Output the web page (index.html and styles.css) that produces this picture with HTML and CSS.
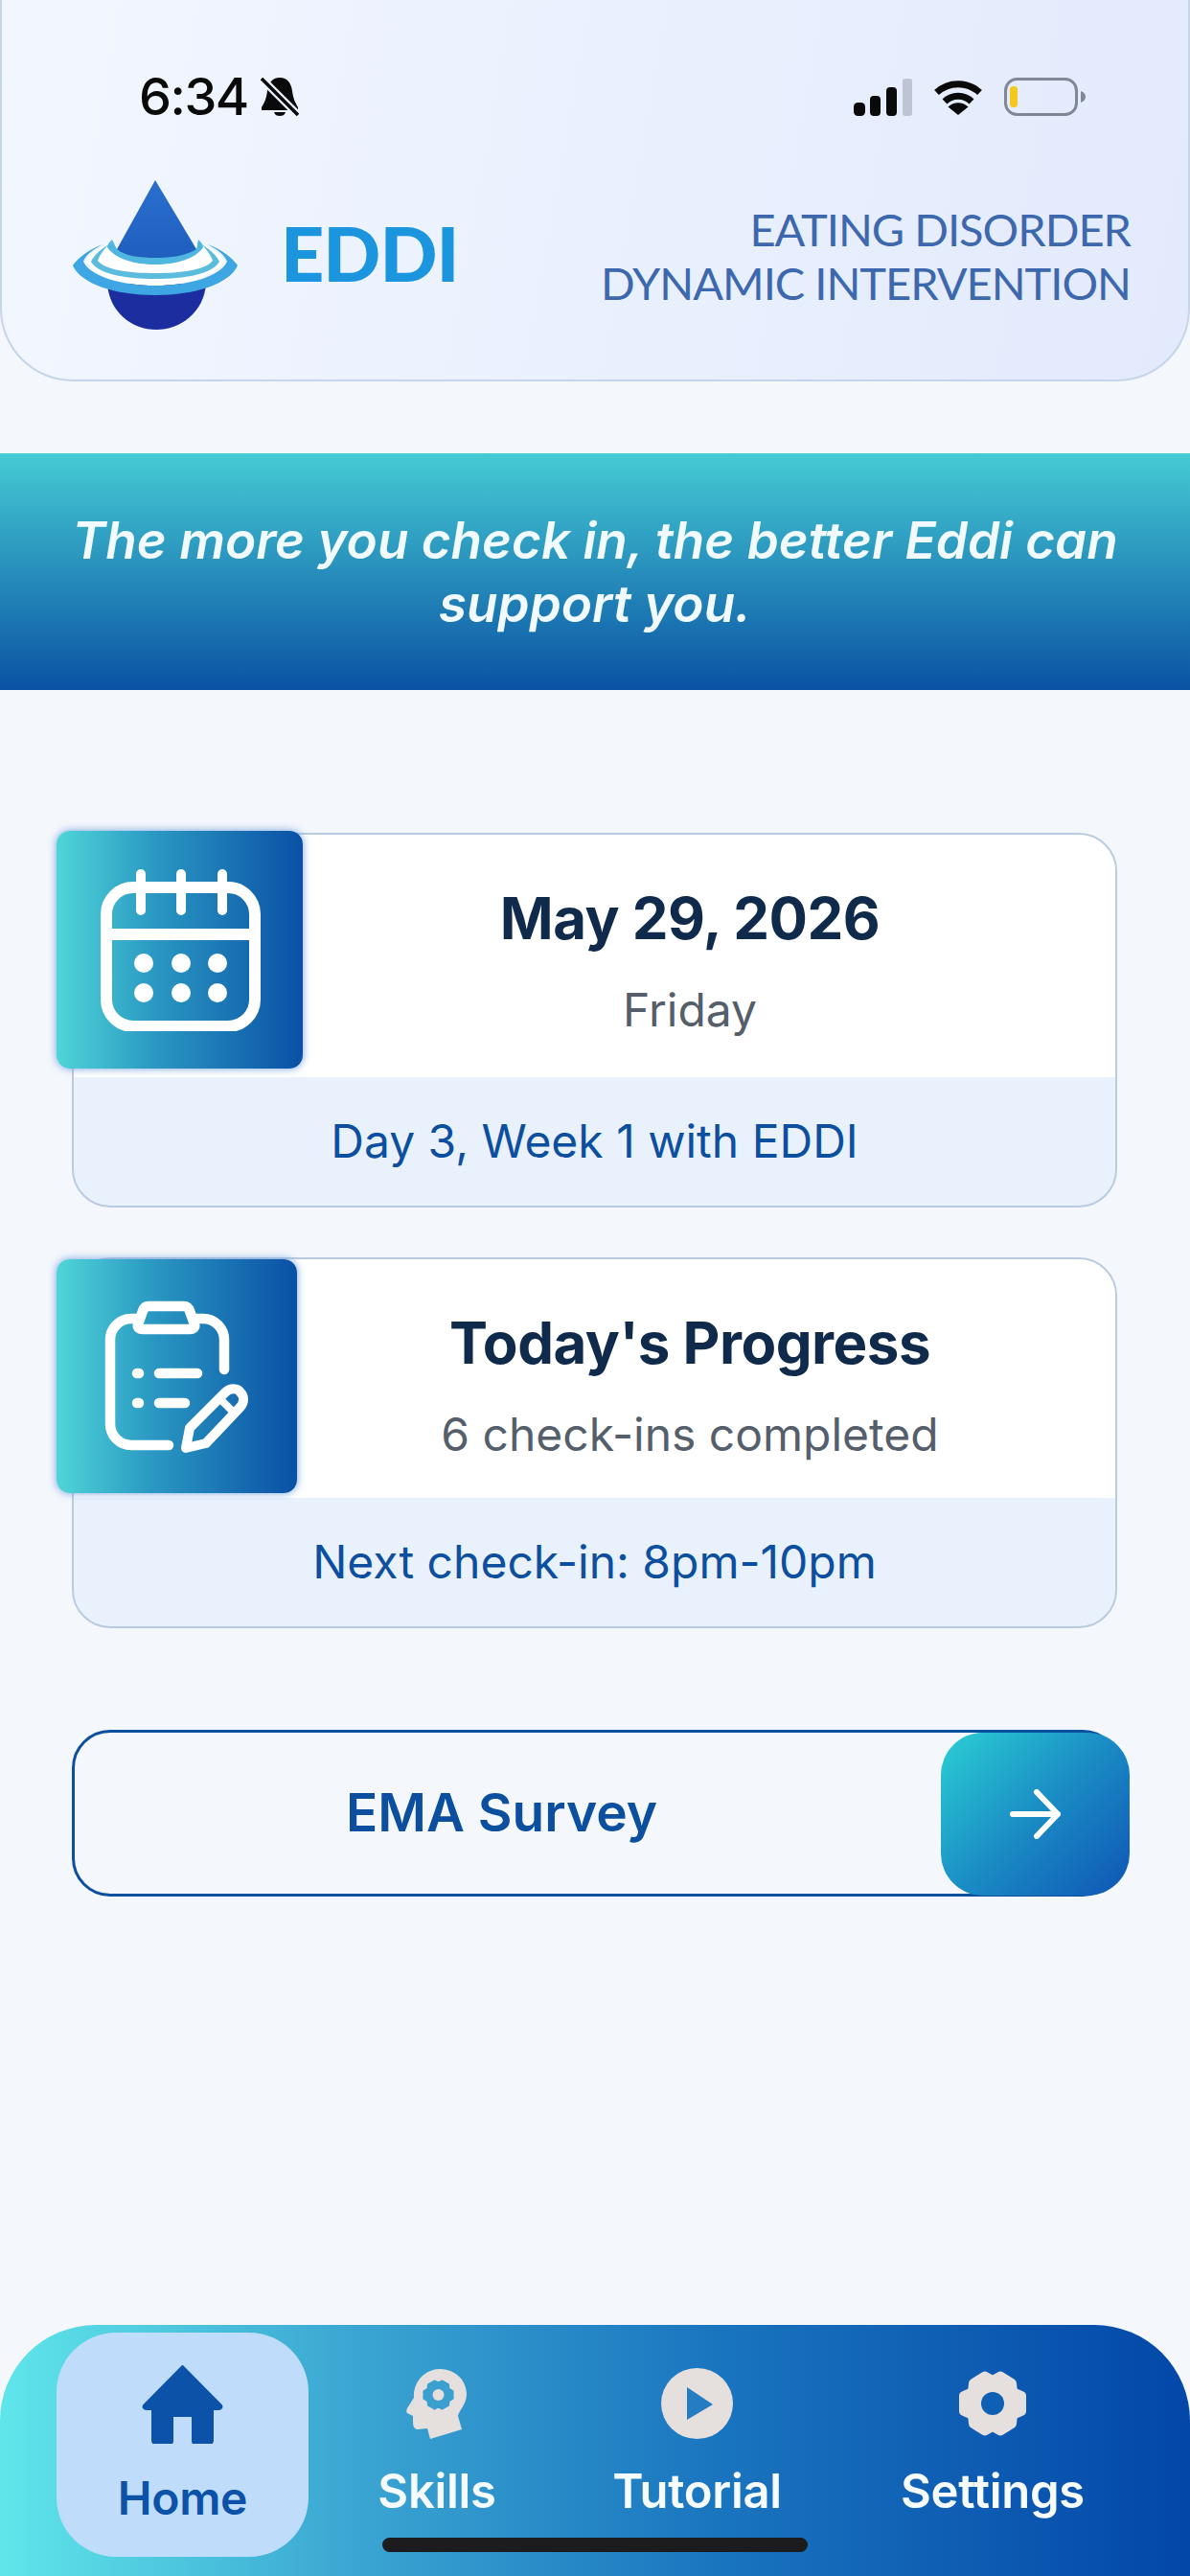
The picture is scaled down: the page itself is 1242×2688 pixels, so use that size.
FILE: index.html
```html
<!DOCTYPE html>
<html lang="en">
<head>
<meta charset="utf-8">
<title>EDDI</title>
<link rel="stylesheet" href="styles.css">
</head>
<body>
<div class="screen">
  <header class="header">
    <div class="status">
      <div class="status-left">
        <span class="time">6:34</span>
        <svg class="bell" viewBox="0 0 40 42"><path d="M20 1c8 0 12 6 13 14 1 8 3 12 6 17v3H1v-3c3-5 5-9 6-17C8 7 12 1 20 1z" fill="#0a0a0a"/><path d="M14 37h12c-1 3-3 4-6 4s-5-1-6-4z" fill="#0a0a0a"/><path d="M3 4l36 36" stroke="#edf3fe" stroke-width="8"/><path d="M1 2l38 38" stroke="#0a0a0a" stroke-width="3.5"/></svg>
      </div>
      <div class="status-right">
        <svg class="signal" viewBox="0 0 61 39"><rect x="0" y="25" width="12" height="14" rx="4.5" fill="#0a0a0a"/><rect x="17" y="18" width="11" height="21" rx="4" fill="#0a0a0a"/><rect x="34" y="9" width="11" height="30" rx="4" fill="#0a0a0a"/><rect x="51" y="0" width="10" height="39" rx="3" fill="#bcc5d1"/></svg>
        <svg class="wifi" viewBox="0 0 52 38"><path d="M3.500 14.500A33 33 0 0 1 48.500 14.500" fill="none" stroke="#0a0a0a" stroke-width="7"/><path d="M12 24A20 20 0 0 1 40 24" fill="none" stroke="#0a0a0a" stroke-width="7"/><path d="M26 38L15.500 29.500A15 15 0 0 1 36.500 29.500Z" fill="#0a0a0a"/></svg>
        <svg class="battery" viewBox="0 0 85 40"><rect x="1.500" y="1.500" width="74" height="37" rx="12" fill="none" stroke="#7f8894" stroke-width="3"/><rect x="6" y="9" width="8" height="22" rx="3.500" fill="#f4c81e"/><path d="M80 14c3 1 5 3 5 6s-2 5-5 6z" fill="#7f8894"/></svg>
      </div>
    </div>
    <div class="brand-row">
      <div class="brand">
        <svg class="logo" viewBox="0 0 172 156">
          <defs>
            <linearGradient id="cone" x1="0" y1="0" x2="0" y2="1"><stop offset="0" stop-color="#2a6fcf"/><stop offset="1" stop-color="#1f5fbe"/></linearGradient>
          </defs>
          <path d="M36 108C38 138 62 156 87 156C112 156 137 138 139 108Z" fill="#1b2d9f"/>
          <path d="M14 84C20 74 30 70 37 67H135C142 70 152 74 158 84C150 100 122 110 86 110C50 110 22 100 14 84Z" fill="#fff"/>
          <path d="M0 89C6 80 18 72 31 67C22 72 13 78 11 85C18 100 50 110 86 110C122 110 154 100 161 85C159 78 150 72 141 67C154 72 166 80 172 89C164 108 128 120 86 120C44 120 8 108 0 89Z" fill="#3ea6e2"/>
          <path d="M19 85C22 78 30 72 37 67C33 72 28 78 26 84C34 94 60 97 86 97C112 97 138 94 146 84C144 78 139 72 135 67C142 72 150 78 153 85C146 98 116 103 86 103C56 103 26 98 19 85Z" fill="#5bbcdd"/>
          <path d="M41 62C37 66 36 68 36 70C44 82 64 88 86 88C108 88 128 82 136 70C136 68 135 66 131 62L129 72H46Z" fill="#4fb6df"/>
          <path d="M86 0L129 72C118 79 102 81 86 81C70 81 54 79 46 72Z" fill="url(#cone)"/>
        </svg>
        <span class="brand-name">EDDI</span>
      </div>
      <p class="brand-sub">EATING DISORDER<br>DYNAMIC INTERVENTION</p>
    </div>
  </header>

  <section class="banner">
    <p>The more you check in, the better Eddi can<br>support you.</p>
  </section>

  <section class="cards">
    <article class="card">
      <div class="tile tile-a">
        <svg class="tile-icon" viewBox="0 0 170 170" fill="none" stroke="#fff" stroke-width="12" stroke-linecap="round">
          <rect x="8" y="20" width="155" height="145" rx="28"/>
          <path d="M5 69H165" stroke-linecap="butt" stroke-width="12"/>
          <path d="M44 6V44M86 6V44M129 6V44" stroke-width="10"/>
          <g fill="#fff" stroke="none"><circle cx="47" cy="99" r="10"/><circle cx="86" cy="99" r="10"/><circle cx="124" cy="99" r="10"/><circle cx="47" cy="130" r="10"/><circle cx="86" cy="130" r="10"/><circle cx="124" cy="130" r="10"/></g>
        </svg>
      </div>
      <div class="card-top card-top-a">
        <h2 class="card-title">May 29, 2026</h2>
        <p class="card-sub">Friday</p>
      </div>
      <div class="card-foot">Day 3, Week 1 with EDDI</div>
    </article>

    <article class="card">
      <div class="tile tile-b">
        <svg class="tile-icon" viewBox="0 0 170 170" fill="none" stroke="#fff" stroke-width="10.500" stroke-linecap="round" stroke-linejoin="round">
          <path d="M136 78V47A22 22 0 0 0 114 25H106M45 25H39A22 22 0 0 0 17 47V135A22 22 0 0 0 39 157H78"/>
          <path d="M57 12H94C97 12 99 14 100 17L105 31C106 34 104 36 100 36H51C47 36 45 34 46 31L51 17C52 14 54 12 57 12Z"/>
          <path d="M45 82H47M68 82H108M45 113H47M68 113H95"/>
          <path d="M96 160L100 139L137 102C142 97 150 97 153 102C157 106 157 112 153 117L117 155Z" stroke-width="10"/>
          <path d="M131 108L147 124" stroke-width="8"/>
        </svg>
      </div>
      <div class="card-top card-top-b">
        <h2 class="card-title">Today's Progress</h2>
        <p class="card-sub">6 check-ins completed</p>
      </div>
      <div class="card-foot">Next check-in: 8pm-10pm</div>
    </article>
  </section>

  <section class="action">
    <div class="action-btn">
      <span class="action-label">EMA Survey</span>
      <span class="action-go">
        <svg class="arrow" viewBox="0 0 54 52" fill="none" stroke="#fff" stroke-width="6" stroke-linecap="round" stroke-linejoin="round"><path d="M3 26H50M28 3L50 26L28 49"/></svg>
      </span>
    </div>
  </section>

  <nav class="nav">
    <div class="nav-item nav-home">
      <svg class="ico-home" viewBox="0 0 87 84"><path d="M43.500 3L84 44C85 46 84 48 81 48H75V80C75 82 74 84 72 84H57C55 84 54 83 54 81V55H33V81C33 83 32 84 30 84H15C13 84 12 82 12 80V48H6C3 48 2 46 3 44Z" fill="#0b52a8" stroke="#0b52a8" stroke-width="2" stroke-linejoin="round"/></svg>
      <span class="nav-label nav-label-home">Home</span>
    </div>
    <div class="nav-item">
      <svg class="ico-small ico-head" viewBox="0 0 64 75">
        <path d="M35 1C51 1 63 13 63 27C63 38 55 44 54 50L58 64L25 74L22 63L12 64C8 64 7 60 7 56V50L1 47C0 46 0 44 1 42L8 31C7 14 20 1 35 1Z" fill="#e5dfdd"/>
        <path transform="translate(33.500 28) scale(.48)" d="M31-8V8L22.500 13L21.500 22.300L8.500 29.800L0 26L-8.500 29.800L-21.500 22.300L-22.500 13L-31 8V-8L-22.500-13L-21.500-22.300L-8.500-29.800L0-26L8.500-29.800L21.500-22.300L22.500-13Z" fill="#3b9fd0" stroke="#3b9fd0" stroke-width="5" stroke-linejoin="round"/>
        <circle cx="33.500" cy="28" r="6" fill="#e5dfdd"/>
      </svg>
      <span class="nav-label">Skills</span>
    </div>
    <div class="nav-item">
      <svg class="ico-small ico-play" viewBox="0 0 75 74"><ellipse cx="37.500" cy="37" rx="37.500" ry="37" fill="#e5dfdd"/><path d="M27 20L54 38L27 54Z" fill="#247cc1"/></svg>
      <span class="nav-label">Tutorial</span>
    </div>
    <div class="nav-item">
      <svg class="ico-small ico-gear" viewBox="-40 -37 80 74"><path d="M30-8V8L21 12L20 21L8 28.500L0 24L-8 28.500L-20 21L-21 12L-30 8V-8L-21-12L-20-21L-8-28.500L0-24L8-28.500L20-21L21-12Z" fill="#e5dfdd" stroke="#e5dfdd" stroke-width="10" stroke-linejoin="round"/><circle r="12" fill="#0f5fb5"/></svg>
      <span class="nav-label">Settings</span>
    </div>
    <div class="home-bar"></div>
  </nav>
</div>
</body>
</html>
```
FILE: styles.css
```css
* { box-sizing: border-box; margin: 0; padding: 0; }
html, body { width: 1242px; height: 2688px; overflow: hidden; }
body { font-family: "Inter", "Liberation Sans", sans-serif; background: #f4f7fc; }
.screen { width: 1242px; height: 2688px; display: flex; flex-direction: column; background: linear-gradient(180deg, #f4f7fc 0%, #f4f7fc 88%, #f5f7f9 100%); }

.header {
  height: 398px;
  background: linear-gradient(100deg, #f2f7ff 0%, #e2eafc 100%);
  border: 2px solid #c6d6ea;
  border-top: 0;
  border-radius: 0 0 76px 76px;
  display: flex;
  flex-direction: column;
  padding: 79px 60px 0 74px;
}
.status { display: flex; justify-content: space-between; align-items: center; height: 44px; padding: 0 0 0 69px; }
.status-left { display: flex; align-items: center; gap: 13px; }
.time { font-size: 54px; line-height: 44px; font-weight: 500; color: #0a0a0a; letter-spacing: -1.500px; }
.bell { width: 40px; height: 42px; display: block; }
.status-right { display: flex; align-items: center; gap: 22px; margin-right: 47px; }
.signal { width: 61px; height: 39px; display: block; }
.wifi { width: 52px; height: 38px; display: block; }
.battery { width: 85px; height: 40px; display: block; }

.brand-row { display: flex; justify-content: space-between; align-items: flex-start; margin-top: 65px; }
.brand { display: flex; align-items: center; gap: 45px; }
.logo { width: 172px; height: 156px; display: block; }
.brand-name { font-family: "Lato", sans-serif; font-weight: 900; font-size: 79px; line-height: 90px; color: #1b95de; letter-spacing: -1px; margin-top: -4px; }
.brand-sub { font-family: "Lato", sans-serif; font-size: 47px; line-height: 56px; color: #3d68ad; text-align: right; letter-spacing: -1px; padding-top: 23px; }

.banner {
  margin-top: 75px;
  height: 247px;
  background: linear-gradient(180deg, #45cbd4 0%, #0a52a3 100%);
  display: flex;
  align-items: center;
  justify-content: center;
}
.banner p { font-size: 53px; line-height: 66px; font-weight: 600; font-style: italic; color: #f0faff; text-align: center; }

.cards { display: flex; flex-direction: column; gap: 52px; margin: 149px 76px 0 75px; }
.card { position: relative; border: 2px solid #b9cbe0; border-radius: 40px; background: #e9f1fd; }
.card-top { background: #fff; border-radius: 38px 38px 0 0; padding: 53px 0 0 199px; text-align: center; }
.card-top-a { height: 253px; }
.card-top-b { height: 249px; }
.card-title { font-size: 60px; line-height: 68px; font-weight: 700; color: #0f2a4a; letter-spacing: -.5px; }
.card-sub { font-size: 48px; line-height: 68px; font-weight: 400; color: #555e6b; margin-top: 28px; }
.card-foot { height: 134px; display: flex; align-items: center; justify-content: center; font-size: 48px; color: #0d4f9f; padding-bottom: 2px; }

.tile {
  position: absolute;
  left: -18px;
  top: -4px;
  border-radius: 14px;
  background: linear-gradient(90deg, #4fd5d8 0%, #2a98c2 40%, #0a50a5 100%);
  box-shadow: 0 0 8px #6f9fdc;
  display: flex;
  align-items: center;
  justify-content: center;
}
.tile-a { width: 257px; height: 248px; }
.tile-b { width: 251px; height: 244px; top: 0; padding-right: 4px; }
.tile-icon { width: 170px; height: 170px; display: block; }

.action { margin: 106px 65px 0 75px; }
.action-btn { position: relative; height: 174px; width: 1095px; border: 3px solid #0b4f9f; border-radius: 40px; display: flex; align-items: center; }
.action-label { width: 891px; text-align: center; font-size: 55px; font-weight: 600; color: #0d4f9f; padding-bottom: 2px; }
.action-go {
  position: absolute;
  right: -12px;
  top: 0;
  width: 197px;
  height: 170px;
  border-radius: 44px;
  background: linear-gradient(135deg, #2bcfd4 0%, #1a8cc4 50%, #0f55b5 100%);
  display: flex;
  align-items: center;
  justify-content: center;
}
.arrow { width: 54px; height: 52px; display: block; }

.nav {
  position: relative;
  margin-top: auto;
  height: 262px;
  border-radius: 100px 100px 0 0;
  background: linear-gradient(90deg, #5fe6ea 0%, #3aa5d2 30%, #1a75bf 60%, #0347a8 100%);
  display: grid;
  grid-template-columns: 263px 268px 275px 342px;
  padding: 8px 0 0 59px;
}
.nav-item { display: flex; flex-direction: column; align-items: center; }
.nav-home { height: 234px; border-radius: 62px; background: #bfdcfb; }
.ico-home { width: 87px; height: 84px; margin-top: 32px; display: block; }
.ico-small { display: block; margin-top: 37px; }
.ico-head { width: 64px; height: 75px; margin-bottom: 26px; }
.ico-play { width: 75px; height: 74px; margin-bottom: 27px; }
.ico-gear { width: 80px; height: 74px; margin-bottom: 27px; }
.nav-label { font-size: 49px; line-height: 56px; font-weight: 600; color: #f6fbff; letter-spacing: -.3px; }
.nav-label-home { color: #0b52a8; margin-top: 29px; font-size: 48px; }
.home-bar { position: absolute; left: 399px; top: 222px; width: 444px; height: 15px; border-radius: 8px; background: #1c1c1e; }
```
